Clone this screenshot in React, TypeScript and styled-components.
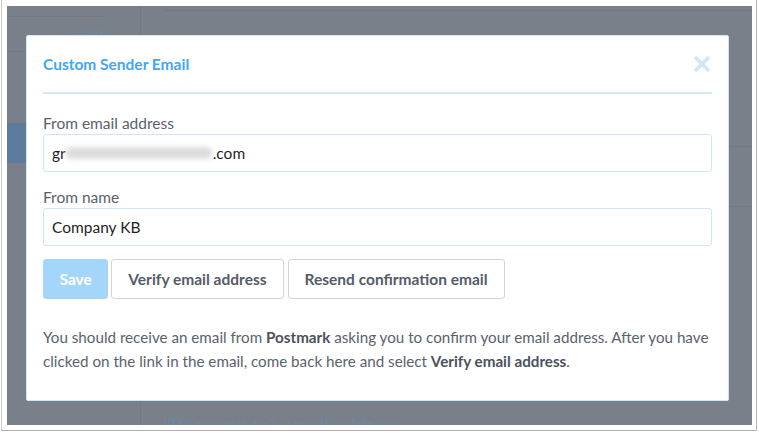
import React from "react";
import styled, { createGlobalStyle } from "styled-components";

const Global = createGlobalStyle`
  html, body { margin: 0; padding: 0; background: #ffffff; }
  body { font-family: Lato, "Open Sans", "Liberation Sans", sans-serif; }
  * { box-sizing: border-box; }
`;

const Frame = styled.div`
  width: 756px;
  height: 431px;
  margin-left: 1px;
  border: 1px solid #c9c9c9;
  border-top: none;
  border-right-color: #b8b8b8;
  border-bottom-color: #b0b0b0;
  padding: 6px 4px 5px 5px;
  background: #ffffff;
`;

const Backdrop = styled.div`
  position: relative;
  width: 100%;
  height: 100%;
  background: #7a8089;
  overflow: hidden;
  display: grid;
  grid-template-columns: 134px 1fr;
`;

const Sidebar = styled.div`
  border-right: 1px solid #727780;
  display: flex;
  flex-direction: column;
`;

const SideRow = styled.div<{ $h: number; $w?: string }>`
  height: ${(p) => p.$h}px;
  width: ${(p) => p.$w || "100%"};
  border-bottom: 1px solid #737881;
  display: flex;
  align-items: center;
  justify-content: flex-end;
  padding-right: 36px;
  color: #6a86a8;
  font-size: 16px;
`;

const SideButton = styled.div`
  margin-top: 71px;
  height: 40px;
  background: #5d7b9c;
  color: #7b95b2;
  font-size: 15px;
  display: flex;
  align-items: center;
  padding-left: 36px;
`;

const Main = styled.div`
  display: flex;
  flex-direction: column;
  padding-left: 23px;
`;

const MainRow = styled.div<{ $h: number }>`
  height: ${(p) => p.$h}px;
  border-bottom: 1px solid #737881;
`;

const Spacer = styled.div<{ $h: number }>`
  height: ${(p) => p.$h}px;
  flex-shrink: 0;
`;

const FaintText = styled.div`
  color: #6c86a6;
  font-size: 20px;
  line-height: 24px;
`;

const Modal = styled.div`
  position: absolute;
  left: 19px;
  top: 29px;
  width: 703px;
  background: #ffffff;
  border: 1px solid #cfe5f8;
  border-radius: 2px;
  padding: 0 16px 27px;
`;

const Header = styled.div`
  display: flex;
  align-items: center;
  justify-content: space-between;
  padding: 18px 0 18px;
  border-bottom: 2px solid #d3e9fb;
`;

const Title = styled.h2`
  margin: 0;
  font-size: 15.5px;
  line-height: 20px;
  font-weight: 700;
  color: #43a6f5;
`;

const Close = styled.button`
  border: none;
  background: none;
  padding: 0;
  width: 18px;
  height: 18px;
  margin-right: 1px;
  display: flex;
  cursor: pointer;
`;

const Field = styled.div<{ $top: number }>`
  margin-top: ${(p) => p.$top}px;
  display: flex;
  flex-direction: column;
  gap: 1px;
`;

const Label = styled.label`
  font-size: 15.5px;
  line-height: 20px;
  color: #5a616a;
`;

const Input = styled.div`
  height: 38px;
  border: 1px solid #cfe5f8;
  border-radius: 3px;
  padding: 0 8px;
  display: flex;
  align-items: center;
  font-size: 15.5px;
  color: #1f1f1f;
`;

const Blur = styled.span`
  display: inline-block;
  width: 146px;
  height: 12px;
  margin: 0 1px 0 0;
  border-radius: 5px;
  background: #dcdcdc;
  filter: blur(2.5px);
`;

const Buttons = styled.div`
  margin-top: 13px;
  display: flex;
  gap: 3px;
`;

const Button = styled.button<{ $primary?: boolean }>`
  height: 40px;
  padding: 0 ${(p) => (p.$primary ? "15.5px" : "16px")};
  border-radius: 3px;
  font-family: inherit;
  font-size: 15.5px;
  font-weight: 700;
  border: 1px solid ${(p) => (p.$primary ? "#a4d5fb" : "#cfd4da")};
  background: ${(p) => (p.$primary ? "#a4d5fb" : "#ffffff")};
  color: ${(p) => (p.$primary ? "#ffffff" : "#555c66")};
  &:last-child { margin-left: 1px; }
`;

const Note = styled.p`
  margin: 26px 0 0;
  font-size: 15.2px;
  line-height: 24px;
  color: #5b626b;
  b { color: #4b525b; font-weight: 700; }
`;

export default function App() {
  return (
    <>
      <Global />
      <Frame>
        <Backdrop>
          <Sidebar>
            <SideRow $h={11} $w="98px" />
            <SideRow $h={35}>520</SideRow>
            <SideButton>ger</SideButton>
          </Sidebar>
          <Main>
            <MainRow $h={5} />
            <Spacer $h={135} />
            <MainRow $h={1} />
            <Spacer $h={59} />
            <MainRow $h={1} />
            <Spacer $h={205} />
            <FaintText>"Respond to" email address</FaintText>
          </Main>
          <Modal>
            <Header>
              <Title>Custom Sender Email</Title>
              <Close aria-label="Close">
                <svg width="18" height="18" viewBox="0 0 18 18">
                  <path d="M2 2 L16 16 M16 2 L2 16" stroke="#cfe6fb" strokeWidth="3.6" strokeLinecap="butt" />
                </svg>
              </Close>
            </Header>
            <Field $top={19}>
              <Label>From email address</Label>
              <Input>
                gr<Blur />.com
              </Input>
            </Field>
            <Field $top={15}>
              <Label>From name</Label>
              <Input>Company KB</Input>
            </Field>
            <Buttons>
              <Button $primary>Save</Button>
              <Button>Verify email address</Button>
              <Button>Resend confirmation email</Button>
            </Buttons>
            <Note>
              You should receive an email from <b>Postmark</b> asking you to confirm your email address. After you have
              clicked on the link in the email, come back here and select <b>Verify email address</b>.
            </Note>
          </Modal>
        </Backdrop>
      </Frame>
    </>
  );
}
